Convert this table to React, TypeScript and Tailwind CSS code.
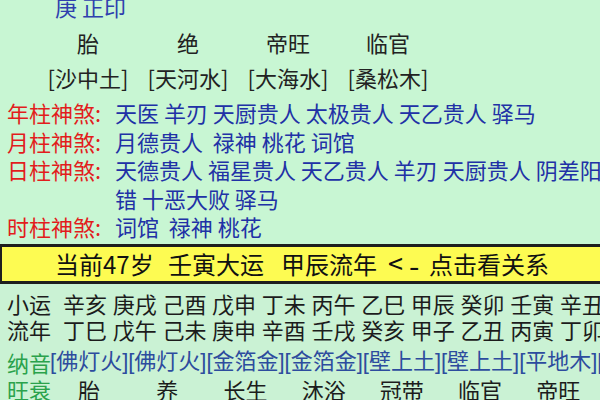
const cjk = { fontFamily: '"Noto Sans CJK SC", "Noto Sans", sans-serif' };
const narrowBrackets = { fontFamily: '"Liberation Sans", "Noto Sans CJK SC", sans-serif' };

const shensha = [
  { label: '年柱神煞:', lines: ['天医 羊刃 天厨贵人 太极贵人 天乙贵人 驿马'] },
  { label: '月柱神煞:', lines: ['月德贵人  禄神 桃花 词馆'] },
  { label: '日柱神煞:', lines: ['天德贵人 福星贵人 天乙贵人 羊刃 天厨贵人 阴差阳', '错 十恶大败 驿马'] },
  { label: '时柱神煞:', lines: ['词馆  禄神 桃花'] },
];

const xiaoyun = ['辛亥', '庚戌', '己酉', '戊申', '丁未', '丙午', '乙巳', '甲辰', '癸卯', '壬寅', '辛丑'];
const liunian = ['丁巳', '戊午', '己未', '庚申', '辛酉', '壬戌', '癸亥', '甲子', '乙丑', '丙寅', '丁卯'];
const nayin = ['佛灯火', '佛灯火', '金箔金', '金箔金', '壁上土', '壁上土', '平地木', '平地木'];
const wangshuai = ['胎', '养', '长生', '沐浴', '冠带', '临官', '帝旺'];

export default function App() {
  return (
    <div className="w-[600px] h-[400px] overflow-hidden flex flex-col text-[22px]" style={cjk}>
      {/* 上半部分 */}
      <div className="bg-[#c8f6d3] flex flex-col pb-[3px]">
        <div className="mt-[-8px] h-[28.5px] leading-[28.5px] pl-[55px] text-[#2f3fae] whitespace-pre">庚 正印</div>
        <div className="mt-[7.5px] h-[28.5px] leading-[28.5px] pl-[38px] grid grid-cols-[100px_100px_100px_100px] text-center text-[#222]">
          <span>胎</span>
          <span>绝</span>
          <span>帝旺</span>
          <span>临官</span>
        </div>
        <div className="mt-[6.5px] h-[28.5px] leading-[28.5px] pl-[38px] grid grid-cols-[100px_100px_100px_100px] text-center text-[#222]">
          <span>[沙中土]</span>
          <span>[天河水]</span>
          <span>[大海水]</span>
          <span>[桑松木]</span>
        </div>
        <div className="mt-[6.5px] flex flex-col">
          {shensha.map((s) => (
            <div key={s.label} className="flex leading-[28.5px]">
              <span className="w-[115px] flex-none pl-[7px] text-[#e21d1d]">{s.label}</span>
              <div className="flex flex-col text-[#2131a6] whitespace-pre">
                {s.lines.map((l) => (
                  <span key={l} className="h-[28.5px]">{l}</span>
                ))}
              </div>
            </div>
          ))}
        </div>
      </div>

      {/* 黄色大运条 */}
      <div className="h-[40px] flex-none bg-[#fdfb52] border-t-[3px] border-b-[3px] border-l-2 border-[#1e1e1e] flex items-center pl-[53px] text-[24px] text-[#111] whitespace-nowrap">
        <span className="w-[113px] flex-none">当前47岁</span>
        <span className="w-[113px] flex-none">壬寅大运</span>
        <span className="w-[107px] flex-none">甲辰流年</span>
        <span className="flex-none flex items-center">
          <span className="inline-block w-[21px] text-[27px]">&lt;</span>
          <span className="inline-block w-[20px] text-[30px] leading-none">-</span>
          <span>点击看关系</span>
        </span>
      </div>

      {/* 下半部分 */}
      <div className="flex-1 bg-[#caf2d4] flex flex-col">
        <div className="mt-[6.5px] flex h-[26px] leading-[26px] text-[#1c1c1c] whitespace-nowrap">
          <span className="w-[63px] flex-none pl-[7px]">小运</span>
          {xiaoyun.map((x, i) => (
            <span key={i} className="w-[49.7px] flex-none">{x}</span>
          ))}
        </div>
        <div className="flex h-[26px] leading-[26px] text-[#1c1c1c] whitespace-nowrap">
          <span className="w-[63px] flex-none pl-[7px]">流年</span>
          {liunian.map((x, i) => (
            <span key={i} className="w-[49.7px] flex-none">{x}</span>
          ))}
        </div>
        <div className="mt-[7px] flex h-[26.5px] leading-[26.5px] whitespace-nowrap">
          <span className="w-[50px] flex-none pl-[7px] text-[#2aa24c]">纳音</span>
          {nayin.map((x, i) => (
            <span key={i} className="w-[78.2px] flex-none text-[#2d4c9e]" style={narrowBrackets}>[{x}]</span>
          ))}
        </div>
        <div className="flex h-[26.5px] leading-[26.5px] whitespace-nowrap">
          <span className="w-[50px] flex-none pl-[7px] text-[#2aa24c]">旺衰</span>
          {wangshuai.map((x, i) => (
            <span key={i} className="w-[78.2px] flex-none text-center text-[#1c1c1c]">{x}</span>
          ))}
        </div>
      </div>
    </div>
  );
}
